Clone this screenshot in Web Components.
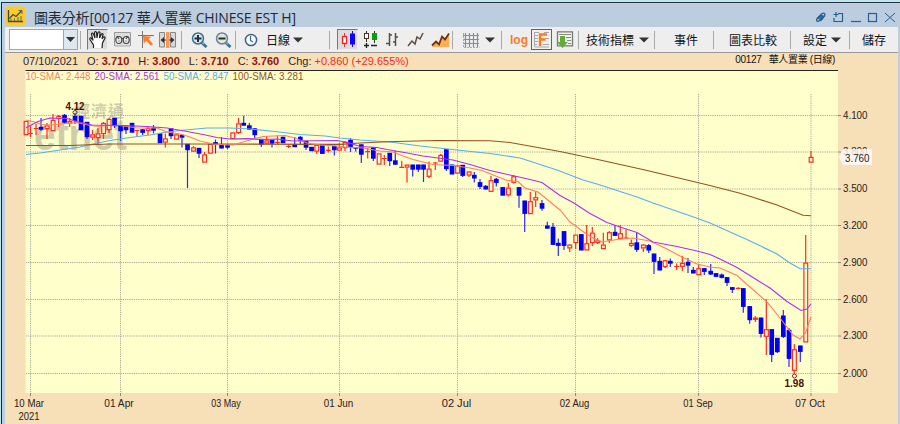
<!DOCTYPE html>
<html lang="zh-Hant">
<head>
<meta charset="utf-8">
<title>圖表分析</title>
<style>
body {
    margin: 0;
    width: 900px;
    height: 424px;
    overflow: hidden;
    background: #bfe6f2;
    font-family: "Liberation Sans", "Noto Sans CJK TC", sans-serif;
}
</style>
</head>
<body>
<chart-window>
    <title-bar slot="title">圖表分析[00127 華人置業 CHINESE EST H]</title-bar>
    <tool-bar slot="tools"></tool-bar>
    <quote-line slot="quote" date="07/10/2021" open="3.710" high="3.800" low="3.710" close="3.760" change="+0.860 (+29.655%)">00127 &nbsp; 華人置業 (日線)</quote-line>
    <price-chart slot="chart"></price-chart>
</chart-window>

<script>
class ChartWindow extends HTMLElement {
    constructor() {
        super();
        this.shadowDOM = this.attachShadow({mode: "open"});
    }

    connectedCallback() {
        this.shadowDOM.innerHTML = `
        <style>
        :host {
            display: block;
            padding: 2px 0 0 1px;
        }
        .frame {
            box-sizing: border-box;
            height: 422px;
            border-top: 1px solid #26323c;
            border-left: 1px solid #18242e;
            background: #bccddf;
            padding: 0 2px 0 3px;
            overflow: hidden;
        }
        .body {
            background: #f7dfb7;
        }
        </style>
        <div class="frame">
            <slot name="title"></slot>
            <div class="body">
                <slot name="tools"></slot>
                <slot name="quote"></slot>
                <slot name="chart"></slot>
            </div>
        </div>
        `;
    }
}

class TitleBar extends HTMLElement {
    constructor() {
        super();
        this.shadowDOM = this.attachShadow({mode: "open"});
    }

    connectedCallback() {
        this.shadowDOM.innerHTML = `
        <style>
        :host {
            display: flex;
            align-items: center;
            height: 24px;
            color: #222a33;
            font: 14px "Open Sans", "Noto Sans CJK TC", sans-serif;
            white-space: nowrap;
        }
        .logo { margin-top: 2px; }
        .name { margin-left: 8px; flex: 1; padding-top: 3px; letter-spacing: -0.14px; }
        .controls { margin-right: 2px; margin-top: 3px; }
        </style>
        <svg class="logo" width="21" height="20" viewBox="0 0 21 20">
            <rect x=".3" y=".5" width="20" height="19" rx="2.5" fill="#ffc928"/>
            <path d="M3.5 4v11.5H18M4.500 12.500l3.500-4 3 2 5.500-5.500" fill="none" stroke="#374d4c" stroke-width="1.300"/>
            <path d="M13.500 4.500h3.500v3.500M6 15v-2M9.500 15v-2.500M13 15v-4M16 15v-5" fill="none" stroke="#4f6a66"/>
        </svg>
        <span class="name"><slot></slot></span>
        <svg class="controls" width="82" height="14" viewBox="814 9 82 14" fill="none" stroke="#235f94" stroke-width="1.200">
            <path d="M823.500 14.500l-4 5q-1.500 1.500-2.500.500t.5-3l4-4q2-1.500 3-.500t0 2.500l-4 5M818.500 18l3.500-4" stroke-width="1.300"/>
            <path d="M838 12.500h4.500v8h-8.500V17M833.500 13.500h5M836 11v5"/>
            <path d="M851 20.500h10"/>
            <rect x="868.500" y="12.500" width="8" height="8"/>
            <path d="M885 12l10 9M895 12l-10 9" stroke-width="1"/>
        </svg>
        `;
    }
}

class ToolItem extends HTMLElement {
    constructor() {
        super();
        this.shadowDOM = this.attachShadow({mode: "open"});
    }

    connectedCallback() {
        const gap = this.getAttribute("gap") || 0;
        const width = this.getAttribute("w");
        const caret = this.hasAttribute("caret")
            ? `<svg width="10" height="6" viewBox="0 0 10 6"><path d="M0 .5h10L5 5.500z" fill="#333"/></svg>`
            : "";
        this.shadowDOM.innerHTML = `
        <style>
        :host {
            display: flex;
            flex: none;
            box-sizing: border-box;
            align-items: center;
            justify-content: space-between;
            margin-left: ${gap}px;
            width: ${width}px;
            height: 21px;
            font-size: 12px;
            color: #111;
            white-space: nowrap;
        }
        :host([pressed]) {
            background: #dcdcdc;
            border: 1px solid #eee;
            border-top-color: #777;
            border-left-color: #777;
        }
        :host([active]) {
            background: #f3efe8;
            border: 1px solid #32719f;
        }
        :host([line]) {
            height: 18px;
            background: #aaa;
        }
        ::slotted(svg) { display: block; flex: none; }
        </style>
        <slot></slot>${caret}
        `;
    }
}

class ToolBar extends HTMLElement {
    constructor() {
        super();
        this.shadowDOM = this.attachShadow({mode: "open"});
    }

    connectedCallback() {
        this.shadowDOM.innerHTML = `
        <style>
        :host {
            display: flex;
            align-items: center;
            box-sizing: border-box;
            height: 26px;
            padding-left: 4px;
            background: #eee;
            border-bottom: 1px solid #999a98;
        }
        .combo {
            display: flex;
            flex: none;
            box-sizing: border-box;
            width: 69px;
            height: 21px;
            border: 1px solid #93a9bb;
            background: #fff;
            justify-content: flex-end;
        }
        .combo span {
            display: flex;
            width: 13px;
            align-items: center;
            justify-content: center;
            background: #dce7ef;
            border-left: 1px solid #93a9bb;
        }
        .log { font: bold 12px "Liberation Sans", sans-serif; color: #ff7925; }
        </style>
        <div class="combo"><span><svg width="9" height="5"><path d="M0 0h9L4.500 5z" fill="#333"/></svg></span></div>
        <tool-item line gap="2" w="1"></tool-item>
        <tool-item gap="6" w="21" pressed>
            <svg width="19" height="19" viewBox="0 0 19 19"><path d="M5.500 18v-3L2 9.500q-.5-2 1-1.500l2 2.500L3.500 4q.5-2 2 0l1.500 4-.5-5.500q1-2 2 0l.5 5.500 1-5.500q1.200-1.500 2 0L11.500 8l2-4q1.500-1 1.500.5L14 9l1.500-2q1.800-.5 1.500 1l-2.500 5-.5 5" fill="#fff" stroke="#222" stroke-width="1.200"/></svg>
        </tool-item>
        <tool-item gap="6" w="17">
            <svg width="17" height="15" viewBox="0 0 17 15"><path d="M.5 14V.5h16V14" fill="#ddd" stroke="#999"/><path d="M1 14h15" stroke="#aaa"/><g fill="#eee" stroke="#444" stroke-width="1.200"><ellipse cx="4.800" cy="8" rx="3" ry="3.500"/><ellipse cx="12.200" cy="8" rx="3" ry="3.500"/><path d="M7.500 6.500h2M3 4l2 3M14 4l-2 3M4.500 9h1M11.500 9h1"/></g></svg>
        </tool-item>
        <tool-item gap="7" w="17">
            <svg width="17" height="17" viewBox="0 0 17 17"><path d="M0 4.500h16M4.500 0v17" stroke="#777"/><path d="M5 5l8.500.8-3 2.200 4.500 5-2 1.800-4.700-5L5.800 12.500z" fill="#ff7a29"/></svg>
        </tool-item>
        <tool-item gap="4" w="17">
            <svg width="17" height="16" viewBox="0 0 17 16"><path d="M.5.5h5V15h-5zM11.500.5h5V15h-5z" fill="#d8d8d5" stroke="#888"/><rect x="7" width="3.500" height="16" fill="#ff9655"/><path d="M1.500 8L5 5v6zM15.500 8L12 5v6z" fill="#333"/><path d="M5 8h1.500M10.500 8H12" stroke="#333" stroke-width="1.500"/></svg>
        </tool-item>
        <tool-item line gap="5" w="1"></tool-item>
        <tool-item gap="9" w="17">
            <svg width="17" height="16" viewBox="0 0 17 16"><path d="M10 10l5.500 5" stroke="#3476a5" stroke-width="3"/><path d="M11 10l2 2" stroke="#cf9b43" stroke-width="2"/><circle cx="7" cy="6.500" r="5.500" fill="#d7e6ea" stroke="#426f8c" stroke-width="1.500"/><path d="M3.500 6.500h7M7 3v7" stroke="#1c3042" stroke-width="2"/></svg>
        </tool-item>
        <tool-item gap="7" w="17">
            <svg width="17" height="16" viewBox="0 0 17 16"><path d="M10 10l5.500 5" stroke="#3476a5" stroke-width="3"/><path d="M11 10l2 2" stroke="#cf9b43" stroke-width="2"/><circle cx="7" cy="6.500" r="5.500" fill="#e4e6d4" stroke="#6586a0" stroke-width="1.500"/><path d="M3.500 6.500h7" stroke="#1c3042" stroke-width="2"/></svg>
        </tool-item>
        <tool-item line gap="3" w="1"></tool-item>
        <tool-item gap="8" w="14">
            <svg width="14" height="14" viewBox="0 0 14 14"><circle cx="7" cy="7" r="5.600" fill="#fafdff" stroke="#386389" stroke-width="1.500"/><path d="M6.500 3v4.500L9 9" fill="none" stroke="#386389" stroke-width="1.200"/></svg>
        </tool-item>
        <tool-item gap="8" w="37" caret>日線</tool-item>
        <tool-item line gap="26" w="1"></tool-item>
        <tool-item gap="7" w="21" pressed>
            <svg width="19" height="19" viewBox="0 0 19 19"><path d="M6.500 3v14" stroke="#e33"/><rect x="4.500" y="6.500" width="4" height="7" fill="#fff" stroke="#e22" stroke-width="1.300"/><path d="M14.500 1v16" stroke="#11c"/><rect x="12" y="3.500" width="5" height="11" fill="#10f"/></svg>
        </tool-item>
        <tool-item gap="5" w="16">
            <svg width="16" height="18" viewBox="0 0 16 18"><path d="M3.500 0v11M11.500 0v12" stroke="#333"/><rect x="1.500" y="2.500" width="4" height="5" fill="#fff" stroke="#432"/><rect x="9" y="2" width="5" height="7" fill="#0b9d0b"/><path d="M1 14.500h5M3.500 12v5M8 14.500h6" stroke="#222" stroke-width="1.300"/></svg>
        </tool-item>
        <tool-item gap="7" w="13">
            <svg width="13" height="16" viewBox="0 0 13 16"><path d="M3.500 1v13M0 11.500h3.500M3.500 3H6M9.500 1v13M7 10h2.500M9.500 5H12" fill="none" stroke="#594d44" stroke-width="1.500"/></svg>
        </tool-item>
        <tool-item gap="8" w="18">
            <svg width="18" height="16" viewBox="0 0 18 16"><path d="M1 14l4-5 3 3 2-7 3 2 3-6" fill="none" stroke="#594d44" stroke-width="1.500"/></svg>
        </tool-item>
        <tool-item gap="6" w="19">
            <svg width="19" height="16" viewBox="0 0 19 16"><path d="M1 15l4-5 3 3 3-8 2 3 5-7v14z" fill="#ffad55"/><path d="M1 13.500l4-4 3 3 3-8 3 3 4-6" fill="none" stroke="#70310d" stroke-width="1.800"/></svg>
        </tool-item>
        <tool-item line gap="2" w="1"></tool-item>
        <tool-item gap="10" w="32" caret>
            <svg width="17" height="16" viewBox="0 0 17 16"><path d="M2.500 1v14M6.500 1v14M10.500 1v14M14.500 1v14M0 3.500h16M0 7.500h16M0 11.500h16" stroke="#858f95" stroke-width="1.200"/><path d="M.5 1v14.500h16" fill="none" stroke="#88afd0" stroke-dasharray="2 1"/></svg>
        </tool-item>
        <tool-item line gap="6" w="1"></tool-item>
        <tool-item gap="8" w="20"><span class="log">log</span></tool-item>
        <tool-item gap="1" w="21" active>
            <svg width="19" height="19" viewBox="0 0 19 19"><path d="M3 2.500h4M12 2.500h5M3 5.500h3M3 8.500h3M13 8.500h4M3 11.500h3M3 14.500h2M11 14.500h6M3 17h14M2.500 2v15" stroke="#a3abb2"/><path d="M8 16V4.500h7M8 9.500h5.500" fill="none" stroke="#ff7925" stroke-width="2.400"/></svg>
        </tool-item>
        <tool-item gap="4" w="18">
            <svg width="18" height="18" viewBox="0 0 18 18"><path d="M1.500.8h15v14h-15z" fill="#f1f1ee" stroke="#777" stroke-width="1.300"/><path d="M3 3.500h12M10 6.500h5M11 9.500h4M12 12.500h3" stroke="#888"/><path d="M4 5h5v6h3l-5.500 6L1 11h3z" fill="#62ad35"/></svg>
        </tool-item>
        <tool-item line gap="4" w="1"></tool-item>
        <tool-item gap="7" w="63" caret>技術指標</tool-item>
        <tool-item line gap="5" w="1"></tool-item>
        <tool-item gap="19" w="24">事件</tool-item>
        <tool-item line gap="15" w="1"></tool-item>
        <tool-item gap="15" w="48">圖表比較</tool-item>
        <tool-item line gap="13" w="1"></tool-item>
        <tool-item gap="12" w="38" caret>設定</tool-item>
        <tool-item line gap="8" w="1"></tool-item>
        <tool-item gap="12" w="24">儲存</tool-item>
        `;
    }
}

class QuoteLine extends HTMLElement {
    constructor() {
        super();
        this.shadowDOM = this.attachShadow({mode: "open"});
    }

    connectedCallback() {
        const field = (label, name) => `<span>${label}: <b>${this.getAttribute(name)}</b></span>`;
        this.shadowDOM.innerHTML = `
        <style>
        :host {
            display: flex;
            box-sizing: border-box;
            height: 17px;
            padding: 0 63px 0 18px;
            gap: 9px;
            font-size: 11px;
            line-height: 16px;
            color: #2b2824;
            white-space: nowrap;
        }
        b { color: #8e1608; }
        i { font-style: normal; color: #f8281c; }
        .stock { margin-left: auto; font-size: 10px; line-height: 13px; color: #111; letter-spacing: -.35px; }
        </style>
        <span>${this.getAttribute("date")}</span>
        ${field("O", "open")}${field("H", "high")}${field("L", "low")}${field("C", "close")}
        <span>Chg: <i>${this.getAttribute("change")}</i></span>
        <span class="stock"><slot></slot></span>
        `;
    }
}

// x, wick top, wick bottom, body top, body bottom; b = falling day, r = rising day
const CANDLES = `
r 26 121 135 121 135|r 30.5 125 137 133.5 133.5|r 36 124 135 128.500 128.500|b 41 118 131 127 129.5
r 47 123 139 125.5 129|r 53 114 131 120 131|r 58.7 115 127 116 119|b 64.5 114 124 115 122.5
r 69.7 118 127 121 123.5|b 75 113 124 116 121|b 81 116 130 116 130|b 87 122 139 122 137
r 92.5 130 140 134.5 137.5|r 98 128 144 133.5 138|r 103.5 122 139 123 134|r 109 118 133 119 130
b 114.5 118 128 118 126|b 120.5 126 141 126 131|b 126 125.5 134 125.5 130|b 132 123 132.5 123 132.5
r 137 130 137 130.5 130.5|b 142.6 129 135 129.5 132.7|r 148 127 135 128 131|b 153.5 125 133.5 128 130.5
b 160 133.5 143 133.5 143|r 165.3 133.5 147.5 138.5 142.5|b 171 128.5 139 128.5 136|r 176.5 133 140 134.5 139.5
b 182 135 147.5 135 137.5|b 187.5 144 188 144 150|r 193.5 146 152 147.5 151.5|b 199 148 158 148 153.5
r 204.5 152 162.5 154.5 162.5|r 210.3 144 153.5 144 153.5|b 215.5 139.5 153.5 142.3 144.5|b 221.5 137 148.3 144.5 148.3
b 227.5 144 149 145 147.5|r 232.7 132.5 139 132.5 139|r 238.5 118 134 123.5 133|b 243.7 115.7 125.5 123 125.5
b 249.3 123 130 125.5 129.5|b 254.7 128 138 128.5 135|b 261.3 139 147 139 144.5|r 266.7 136 144 140.5 143.5
b 272 140 147.5 140 143.5|r 277.5 135.5 144.5 142.3 142.3|b 283 136.5 143 137 143|r 288.7 144.5 148 146.3 146.3
b 294.7 137 147 144.5 147|b 300.3 136 144 137 140.5|b 306 141 150 141 147.5|b 311.5 147 151 147 151
r 316.7 145 154 145 151.5|b 322.3 145.5 153.7 145.5 153.7|r 328.3 146.5 152.5 150.3 150.3|b 334.3 146 155.5 146 150
r 339.3 143 151 147.5 150.5|r 345 141.5 151 142 148|b 350.5 138 152 140 147|b 355.7 147 151.5 147.5 148.5
b 361.3 144.5 163 144.5 154.5|r 367.7 148 158.5 151.7 151.7|b 373.3 147 161 147.5 158.5|r 379 153.5 164.5 153.5 164.5
r 384.3 155 165 158.5 158.5|b 389.7 153 166 153 161|b 395.3 151 165 160.5 164.5|r 401.7 161 168 167.3 167.3
r 407 164.5 182.5 164.7 167.5|b 412.7 164.7 176.5 164.7 169.5|b 418.3 164.7 172 164.7 169.5|b 423.5 164.7 182 164.7 169.5
r 429 161.5 178 168.7 176.7|r 435.3 162 170 163 163|r 440.7 154 162 155 161.5|b 446.3 149 171 149.3 169
b 452 164.7 174.3 164.7 174.3|r 457.5 165 174 165.5 173.5|b 462.7 165 177 165 175.7|r 469 171 177 171.5 175.5
b 474.3 172 182.5 175 178.3|b 480 179 189 182.3 186.7|b 485.7 185 189.5 186 189.3|r 491 176 192 180.3 191.7
b 496.3 178 186.5 179 182.7|b 502.7 187.3 195.5 187.3 195.5|r 508.3 183 196.5 187.7 195.3|r 513.7 175 183.5 176.3 182.7
b 519 187.3 207.7 187.3 195.5|b 524.7 200.7 232 200.7 213.7|r 530.3 192 214 201.3 214|r 535.7 191 207 197.3 200.3
b 542 200 210.7 203.3 208.5|b 547.3 221.7 228.5 225.7 228.5|b 553 223 245 227 244.7|b 558.3 238.5 256 243 245.7
b 564 231.3 250 231.3 245.7|r 569.7 244 252 244.7 248.3|r 575.7 234.7 249 234.7 243|b 581.3 234.3 250.3 234.3 250.3
r 586.7 225 250.3 243.3 250.3|r 592.3 227 246 232.7 243|r 597.7 238 244 240.5 243|r 603.3 232.7 249 244.7 249
r 609.3 231 243 232.3 240.3|b 615 225 235.7 232 235.7|r 620.3 225 239 233.3 238.7|r 626 229.5 238.7 238 238
r 631.3 239.5 247 243 245.7|b 636.7 233 252 242.5 249.7|r 643.3 244 252 244.7 248.3|b 648.7 244 253 245.3 250.3
b 654 253.7 274 253.7 261.7|b 659.7 257 270.3 261 270.3|r 665 260 268 260.3 267|b 670.3 258.5 267 261 263.5
r 676.7 263.5 270 266.5 266.5|r 682.3 255.7 271 263 266.7|b 688 258 273 262 265.5|b 693.3 267 273.3 270 273.3
r 698.7 264 275 268.3 275|b 704.3 268 275 268.3 271.7|b 710.7 264 275 271 274.3|b 716 273 277 273.3 276.7
b 721.7 273.5 278.5 274.7 277.7|b 727 277 286 277.3 282.7|b 732.3 287 293 287.3 289.7|r 738.3 287.3 289.3 288.3 288.3
b 743.3 288.3 312.7 288.3 306.7|b 749.7 306 323.7 306.3 320|r 755.3 316 322 317.7 319.7|b 761 317.7 337.5 317.7 333.7
r 766.3 299.3 355 329.3 336.7|b 771.7 329.3 362 329.3 354.7|b 777.3 338 353 338 352|b 783.3 310 338 315.7 336.7
b 789 328 367 330 358.7|r 794.3 344 374 349.3 370.7|b 800.3 345.7 362 345.7 351.7|r 805.7 235 342.3 262.7 342.3
r 811 151 163 157 162.5`;

const AVERAGES = [
    {label: "50-SMA: 2.847", x: 163.5, width: 65, color: "#58aef0", points: "26,154.5 40,153 60,150 80,147 95,143.500 110,140.500 130,137.500 150,135 167,132 185,130 207,128 230,128 250,129 275,131.500 300,134.500 325,136 340,138 360,140 390,142 420,146 457,150 490,153.500 520,158 557,170 583,180 597,184 617,190.500 637,197 653,203 677,211.300 697,218.300 710,223 748,240 777,254 790,263 800,268.700 811,268.700"},
    {label: "100-SMA: 3.281", x: 232.500, width: 71, color: "#93531f", points: "26,145.500 70,145.500 110,144 190,144 340,144.300 360,143 387,141.700 437,140.500 490,140.700 510,142.500 560,151.500 600,160 645,170 710,185.500 740,193.300 753,197.300 777,205 803,215.300 811,215.700"},
    {label: "10-SMA: 2.448", x: 25.500, width: 65, color: "#ff7f66", points: "26,120 36.500,122.500 41.500,124.500 50,125 66,123.500 77,122.500 88,125 98,126.500 107,125.500 120,125.500 137,128 157,128 167,132 180,134 190,137 200,141 213,144 227,145 233,145 243,142 253,139 263,136.500 285,135.500 295,138 307,143 320,145 337,146 345,147 363,148 380,151 393,152 403,156 413,159.500 427,163 433,164.500 453,165.500 470,168 482,170.500 497,176.500 507,180.500 518,181.500 525,188 538,192 543,196 560,210 570,222 577,227 585,233 593,238 602,242 617,239.500 633,238 650,241 667,249 680,256 697,264 710,267 720,268 737,275.500 750,287 767,302 780,318 793,335 800,339 805.500,333 811,317"},
    {label: "20-SMA: 2.561", x: 94.500, width: 65, color: "#ad30f0", points: "26,127.700 38,121.500 50,118 67,118.500 77,121.500 92,125 123,125.500 147,126.500 167,128 187,131.500 203,134.500 217,137.500 230,139 247,138.700 263,139.500 277,139 293,141 337,140.500 348,142.500 360,146.500 377,147.500 387,149.500 403,152.300 423,156 453,160 470,164.500 490,170.500 510,175 530,179.500 542,182.500 560,195.500 573,202.500 590,213.500 607,222.500 623,228 637,232.500 653,242 677,246.500 697,251 710,254.500 720,259 737,267.500 757,280 770,288 787,301.500 801,310.500 807,309 811,304"}
];

const PRICES = [["4.100", 115.5], ["3.800", 152], ["3.500", 189], ["3.200", 225.5], ["2.900", 262.5], ["2.600", 299.5], ["2.300", 336], ["2.000", 373.5]];
const DATES = [["10 Mar", 30.5, 29], ["01 Apr", 120.5, 119], ["03 May", 227.5, 226], ["01 Jun", 339.5, 338.5], ["02 Jul", 457.5, 456.5], ["02 Aug", 575.5, 574.5], ["01 Sep", 698.5, 698], ["07 Oct", 811, 810]];

class PriceChart extends HTMLElement {
    constructor() {
        super();
        this.shadowDOM = this.attachShadow({mode: "open"});
    }

    connectedCallback() {
        this.render();
    }

    grid() {
        return PRICES.map(([, y]) => `<path class="grid" d="M26 ${y}H838"/><path class="tick" d="M838 ${y}h3"/>`).join("")
            + DATES.map(([, x]) => `<path class="grid" d="M${x} 94V393"/><path class="tick" d="M${x} 393v3"/>`).join("");
    }

    candles() {
        return CANDLES.trim().split(/[|\n]/).map(row => {
            const [kind, ...nums] = row.split(" ");
            const [x, high, low, top, bottom] = nums.map(Number);
            if (kind === "b") {
                return `<path d="M${x} ${high}V${low}" stroke="#2c2cf0" stroke-width="1.2"/>`
                    + `<rect x="${x - 2.3}" y="${top - .2}" width="4.7" height="${Math.max(bottom - top + .4, 1.4)}" fill="#0000f8"/>`;
            }
            if (top === bottom) {
                return `<path d="M${x} ${high}V${low}M${x - 2.4} ${top}h4.8" stroke="#ff2a20" stroke-width="1.2"/>`;
            }
            return `<path d="M${x} ${high}V${top}M${x} ${bottom}V${low}" stroke="#ff2a20" stroke-width="1.2"/>`
                + `<rect x="${x - 1.8}" y="${top + .4}" width="3.8" height="${Math.max(bottom - top - .8, 1)}" fill="#ffffd0" stroke="#ff2a20" stroke-width="1.2"/>`;
        }).join("");
    }

    render() {
        this.shadowDOM.innerHTML = `
        <style>
        :host {
            display: block;
            height: 354px;
        }
        svg { display: block; }
        text { font: 10.5px "Liberation Sans", sans-serif; fill: #26231c; }
        .grid { stroke: #aaa99a; stroke-dasharray: 1.2 1; }
        .tick { stroke: #888; }
        .average { fill: none; stroke-width: 1.15; }
        .legend { font-size: 10px; }
        .mark { font-weight: bold; fill: #4a0e08; }
        .brand { font: bold 44px "Liberation Sans", sans-serif; fill: #cfcda9; }
        .brand-zh { font: bold 16px "Noto Sans CJK TC", sans-serif; fill: #cfcda9; }
        </style>
        <svg width="893" height="354" viewBox="5 70 893 354">
            <rect x="25.500" y="70" width="812.500" height="323" fill="#ffffcb"/>
            <path d="M25.500 70.500H838" stroke="#28251e"/>
            <text class="brand-zh" x="74" y="117" textLength="50">經濟通</text>
            <text class="brand" x="34" y="150" textLength="93" lengthAdjust="spacingAndGlyphs">etnet</text>
            ${this.grid()}
            ${this.candles()}
            ${AVERAGES.map(a => `<polyline class="average" points="${a.points}" stroke="${a.color}"/>`).join("")}
            ${AVERAGES.map(a => `<text class="legend" x="${a.x}" y="80.300" textLength="${a.width}" lengthAdjust="spacingAndGlyphs" style="fill:${a.color}">${a.label}</text>`).join("")}
            <circle cx="75" cy="112.500" r="2" fill="none" stroke="#541"/>
            <text class="mark" x="65.500" y="109.500" textLength="19" lengthAdjust="spacingAndGlyphs">4.12</text>
            <circle cx="794.500" cy="376" r="2" fill="none" stroke="#931f13"/>
            <text class="mark" x="784.500" y="387" textLength="19.500" lengthAdjust="spacingAndGlyphs">1.98</text>
            ${PRICES.map(([p, y]) => `<text x="843" y="${y + 3.3}" textLength="24.500" lengthAdjust="spacingAndGlyphs">${p}</text>`).join("")}
            <path d="M839 157l4-8h29v16h-29z" fill="#fffafa" fill-opacity=".82"/>
            <text x="845" y="161.500" textLength="24.500" lengthAdjust="spacingAndGlyphs">3.760</text>
            ${DATES.map(([d, , x]) => `<text x="${x}" y="406.500" text-anchor="middle" textLength="${x > 30 ? 29.5 : 30}" lengthAdjust="spacingAndGlyphs">${d}</text>`).join("")}
            <text x="29" y="419.500" text-anchor="middle" textLength="21" lengthAdjust="spacingAndGlyphs">2021</text>
        </svg>
        `;
    }
}

customElements.define("chart-window", ChartWindow);
customElements.define("title-bar", TitleBar);
customElements.define("tool-item", ToolItem);
customElements.define("tool-bar", ToolBar);
customElements.define("quote-line", QuoteLine);
customElements.define("price-chart", PriceChart);
</script>
</body>
</html>
